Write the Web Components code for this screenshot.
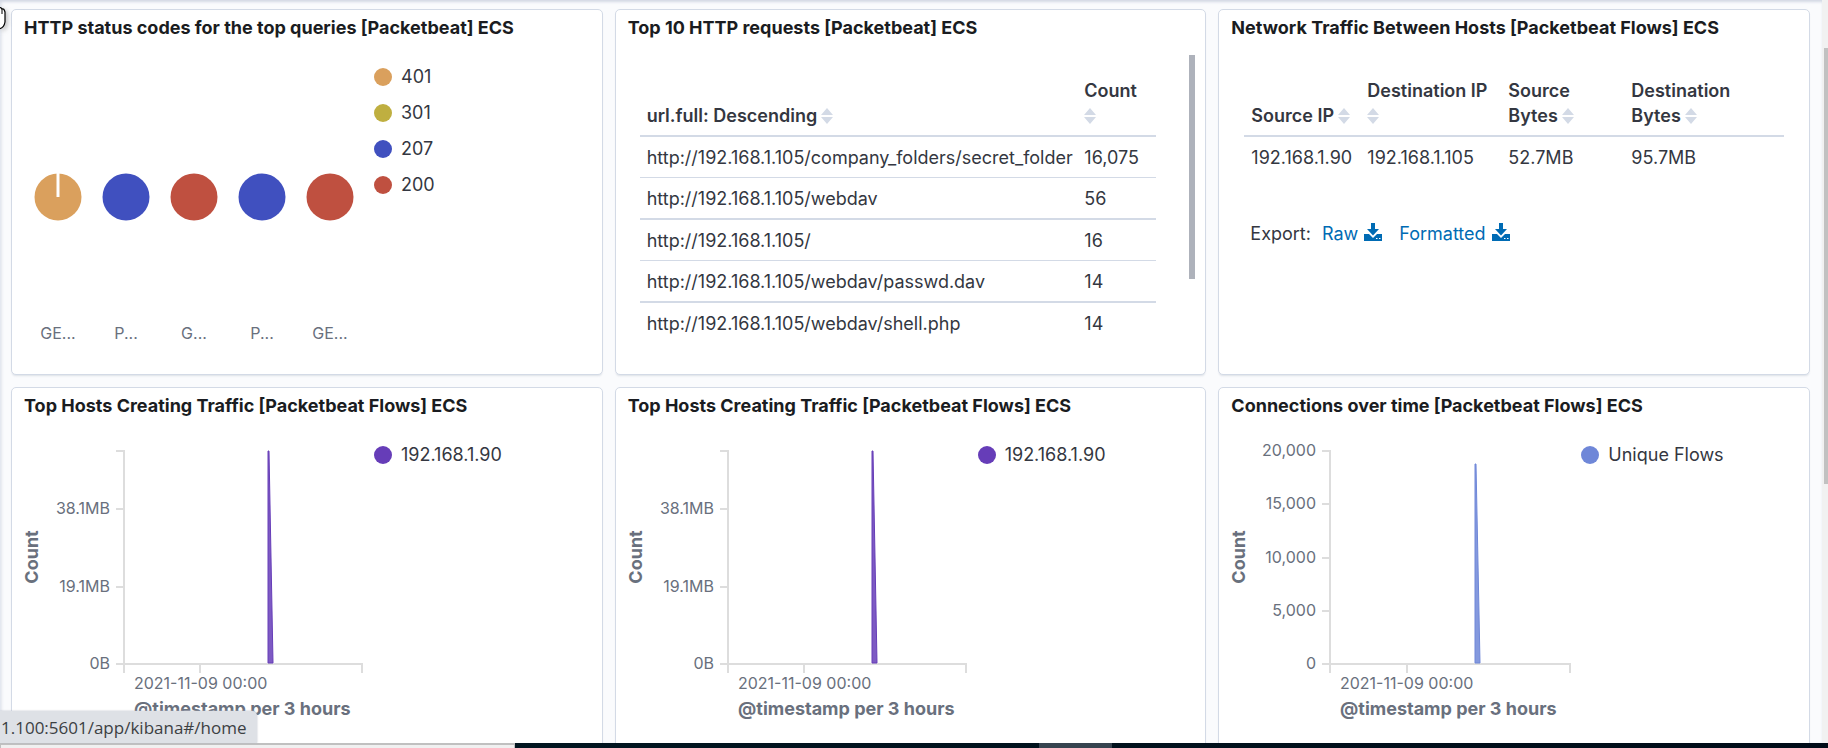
<!DOCTYPE html>
<html lang="en">
<head>
<meta charset="utf-8">
<title>Packetbeat dashboard</title>
<style>
  html, body { margin: 0; height: 100%; overflow: hidden; }
  body { font-family: Inter, "Liberation Sans", sans-serif; color: #343741; background: #fafbfd; }
</style>
</head>
<body>
<dash-page>
  <dash-panel heading="HTTP status codes for the top queries [Packetbeat] ECS">
    <pie-row></pie-row>
    <chart-legend items="401:#daa05d,301:#bfaf40,207:#4050bf,200:#bf5040"></chart-legend>
  </dash-panel>
  <dash-panel heading="Top 10 HTTP requests [Packetbeat] ECS"><requests-table></requests-table></dash-panel>
  <dash-panel heading="Network Traffic Between Hosts [Packetbeat Flows] ECS"><traffic-table></traffic-table></dash-panel>
  <dash-panel heading="Top Hosts Creating Traffic [Packetbeat Flows] ECS">
    <area-chart axis="113" end="351" mid="189" peak="0" ticks=",38.1MB,19.1MB,0B" ys="64,122,200,277" color="#663db8"></area-chart>
    <chart-legend items="192.168.1.90:#663db8"></chart-legend>
  </dash-panel>
  <dash-panel heading="Top Hosts Creating Traffic [Packetbeat Flows] ECS">
    <area-chart axis="113" end="351" mid="189" peak="0" ticks=",38.1MB,19.1MB,0B" ys="64,122,200,277" color="#663db8"></area-chart>
    <chart-legend items="192.168.1.90:#663db8"></chart-legend>
  </dash-panel>
  <dash-panel heading="Connections over time [Packetbeat Flows] ECS">
    <area-chart axis="112" end="352" mid="189" peak="13" ticks="20000,15000,10000,5000,0" ys="64,117,171,224,277" color="#6f87d8"></area-chart>
    <chart-legend items="Unique Flows:#6f87d8"></chart-legend>
  </dash-panel>
</dash-page>

<script>
class Base extends HTMLElement {
  connectedCallback() {
    if (this.shadowRoot) return;
    this.attachShadow({ mode: 'open' }).innerHTML = this.render();
  }
}

customElements.define('dash-page', class extends Base {
  render() {
    return `<style>
      :host { display: flex; flex-direction: column; height: 100vh; position: relative; }
      .view { flex: 1; min-height: 0; display: flex; overflow: hidden; }
      main { flex: 1; display: grid; grid-template-columns: repeat(3, minmax(0, 1fr)); grid-auto-rows: 366px;
        gap: 12px; padding: 9px 12px 0 11px; overflow: hidden;
        box-shadow: inset 0 3px 3px -1px #d3d8e4, inset 3px 0 3px -1px #e4e7ef; }
      .bar { width: 6px; background: #f1f1f1; display: flex; justify-content: flex-end; }
      .bar i { width: 4px; height: 436px; margin-top: 48px; background: #c1c1c1; }
      .task { height: 5px; display: flex; background: linear-gradient(90deg, #011923, #000c18); }
      .win { width: 513px; border: solid #c0c0c0; border-width: 2px 1px 0; background: #f0f0f0; }
      .act { width: 73px; margin-left: 524px; background: #36434f; }
      .status { position: absolute; left: 0; bottom: 5px; box-sizing: border-box; width: 257px; height: 32px;
        padding-left: 1px; background: #dee1e6; border-top-right-radius: 5px; overflow: hidden;
        font: 17px/34px "Open Sans", "Noto Sans", sans-serif; color: #3c4043; white-space: nowrap;
        box-shadow: 0 0 2px #b8bcc4; }
      .hand { position: absolute; left: 0; top: 4px; width: 12px; height: 30px; filter: drop-shadow(2px 2px 2px #8888); }
    </style>
    <div class="view"><main><slot></slot></main><div class="bar"><i></i></div></div>
    <div class="task"><span class="win"></span><span class="act"></span></div>
    <div class="status">1.100:5601/app/kibana#/home</div>
    <svg class="hand" viewBox="0 0 12 30"><path d="M-1 4Q1 3 2 5Q4 4 5 8V18Q4 24-1 25" fill="#fff" stroke="#000" stroke-width="1.2"/><path d="M2 5V10" stroke="#000"/></svg>`;
  }
});

customElements.define('dash-panel', class extends Base {
  render() {
    return `<style>
      :host { display: flex; flex-direction: column; box-sizing: border-box; min-width: 0; background: #fff;
        border: 1px solid #d3dae6; border-radius: 5px; box-shadow: 0 2px 2px -1px #98a2b34d; }
      h2 { margin: 0; padding: 5px 12px 0; font-size: 18px; line-height: 26px; font-weight: 700; color: #1a1c21; white-space: nowrap; }
      .body { flex: 1; min-height: 0; display: flex; padding-top: 14px; }
    </style><h2>${this.getAttribute('heading')}</h2><div class="body"><slot></slot></div>`;
  }
});

customElements.define('chart-legend', class extends Base {
  render() {
    const items = this.getAttribute('items').split(',').map(s => s.split(':'));
    return `<style>
      :host { display: block; padding-top: 3px; }
      ul { list-style: none; margin: 0; padding: 0; }
      li { display: flex; align-items: center; gap: 9px; height: 36px; font-size: 18px; white-space: nowrap; }
      i { width: 18px; height: 18px; border-radius: 50%; margin-top: 2px; }
    </style><ul>${items.map(([t, c]) => `<li><i style="background:${c}"></i>${t}</li>`).join('')}</ul>`;
  }
});

customElements.define('pie-row', class extends Base {
  render() {
    const pies = [['GE...', '#daa05d', 1], ['P...', '#4050bf'], ['G...', '#bf5040'], ['P...', '#4050bf'], ['GE...', '#bf5040']];
    return `<style>
      :host { display: flex; width: 340px; padding: 0 10px 0 12px; }
      figure { flex: 1; margin: 0; display: flex; flex-direction: column; align-items: center; padding-top: 117px; }
      svg { width: 50px; height: 50px; }
      figcaption { margin-top: 100px; font-size: 16px; line-height: 22px; color: #69707d; }
    </style>${pies.map(([t, c, cut]) => `<figure><svg viewBox="0 0 50 50"><circle cx="25" cy="25" r="23.5" fill="${c}"/>${cut ? '<path d="M25 0V25" stroke="#fff" stroke-width="3"/>' : ''}</svg><figcaption>${t}</figcaption></figure>`).join('')}`;
  }
});

customElements.define('area-chart', class extends Base {
  render() {
    const n = k => +this.getAttribute(k), ax = n('axis'), end = n('end'), mid = n('mid'), pk = 64 + n('peak');
    const ys = this.getAttribute('ys').split(',').map(Number);
    const labels = this.getAttribute('ticks').split(',').map(t => /^\d+$/.test(t) ? (+t).toLocaleString('en-US') : t);
    const c = this.getAttribute('color');
    /* the drawing starts 46px below the panel's top edge */
    return `<style>
      :host { display: block; width: 362px; }
      svg { display: block; width: 362px; height: 300px; overflow: visible; }
      text { font-size: 16px; fill: #69707d; }
      .t { font-size: 18px; font-weight: 700; }
      .ax { fill: none; stroke: #ddd; stroke-width: 2; }
    </style>
    <svg viewBox="1 46 362 300" role="img" aria-label="Count over time">
      <path class="ax" d="M${ax - 8} 64H${ax}V286M${ax - 8} 277H${end}V286M${mid} 277V286"/>
      ${ys.map((y, i) => `<path class="ax" d="M${ax - 8} ${y}H${ax}"/><text x="${ax - 14}" y="${y + 5}" text-anchor="end">${labels[i]}</text>`).join('')}
      <path d="M257 276V${pk}H258L262 276Z" fill="${c}" fill-opacity=".85" stroke="${c}"/>
      <text x="${ax + 10}" y="302">2021-11-09 00:00</text>
      <text class="t" x="${ax + 10}" y="328">@timestamp per 3 hours</text>
      <text class="t" transform="translate(27 170) rotate(-90)" text-anchor="middle">Count</text>
    </svg>`;
  }
});

const sort = '<button aria-label="Sort"><svg viewBox="0 0 12 16"><path d="M0 7L6 0L12 7ZM0 9L6 16L12 9Z" fill="#d3dae6"/></svg></button>';
const sortAlone = sort.replace('<button', '<button class="alone"');
const tableCss = `
  table { border-collapse: separate; border-spacing: 0; table-layout: fixed; width: 100%; font-size: 18px; line-height: 25px; }
  th, td { text-align: left; white-space: nowrap; padding: 8px 0 7px 7px; }
  th { vertical-align: bottom; font-weight: 600; padding: 7px 0 7px 7px; border-bottom: 2px solid #d3dae6; }
  button { border: 0; padding: 0; margin: 0 0 0 4px; background: none; width: 12px; height: 16px; vertical-align: -2px; line-height: 0; }
  .alone { margin-left: 0; }
  button svg { width: 12px; height: 16px; }`;

customElements.define('requests-table', class extends Base {
  render() {
    const rows = [['company_folders/secret_folder', '16,075'], ['webdav', '56'], ['', '16'], ['webdav/passwd.dav', '14'], ['webdav/shell.php', '14']];
    return `<style>
      :host { flex: 1; display: flex; padding: 0 10px 0 24px; }
      ${tableCss}
      .wrap { flex: 1; padding: 16px 33px 0 0; }
      .count { width: 79px; }
      td { border-bottom: 1px solid #d3dae6; }
      tr:nth-child(even) td { border-bottom-width: 2px; }
      tr:last-child td { border: 0; }
      .thumb { width: 6px; height: 224px; background: #aeb2bb; }
    </style><div class="wrap"><table><colgroup><col><col class="count"></colgroup>
    <thead><tr><th>url.full: Descending${sort}</th><th>Count<br>${sortAlone}</th></tr></thead>
    <tbody>${rows.map(([u, c]) => `<tr><td>http://192.168.1.105/${u}</td><td>${c}</td></tr>`).join('')}</tbody></table></div>
    <div class="thumb"></div>`;
  }
});

customElements.define('traffic-table', class extends Base {
  render() {
    const dl = '<svg viewBox="0 0 18 18"><path d="M7 0H11V6H15L9 12.500L3 6H7ZM0 11H5L9 15L13 11H18V18H0Z" fill="#006bb4"/><path d="M12 15.500H13.500M15 15.500H16.500" stroke="#fff"/></svg>';
    return `<style>
      :host { flex: 1; display: block; padding: 16px 25px 0; }
      ${tableCss}
      .a { width: 116px; } .b { width: 141px; } .c { width: 123px; }
      .export { display: flex; margin: 44px 0 0 6px; font-size: 18px; line-height: 25px; white-space: nowrap; }
      a { display: flex; gap: 6px; margin-left: 11px; color: #006bb4; text-decoration: none; }
      a + a { margin-left: 17px; }
      a svg { width: 18px; height: 18px; margin-top: 2px; }
    </style><table><colgroup><col class="a"><col class="b"><col class="c"><col></colgroup>
    <thead><tr><th>Source IP${sort}</th><th>Destination IP<br>${sortAlone}</th><th>Source<br>Bytes${sort}</th><th>Destination<br>Bytes${sort}</th></tr></thead>
    <tbody><tr><td>192.168.1.90</td><td>192.168.1.105</td><td>52.7MB</td><td>95.7MB</td></tr></tbody></table>
    <div class="export"><span>Export:</span><a href="#raw">Raw ${dl}</a><a href="#formatted">Formatted ${dl}</a></div>`;
  }
});
</script>
</body>
</html>
